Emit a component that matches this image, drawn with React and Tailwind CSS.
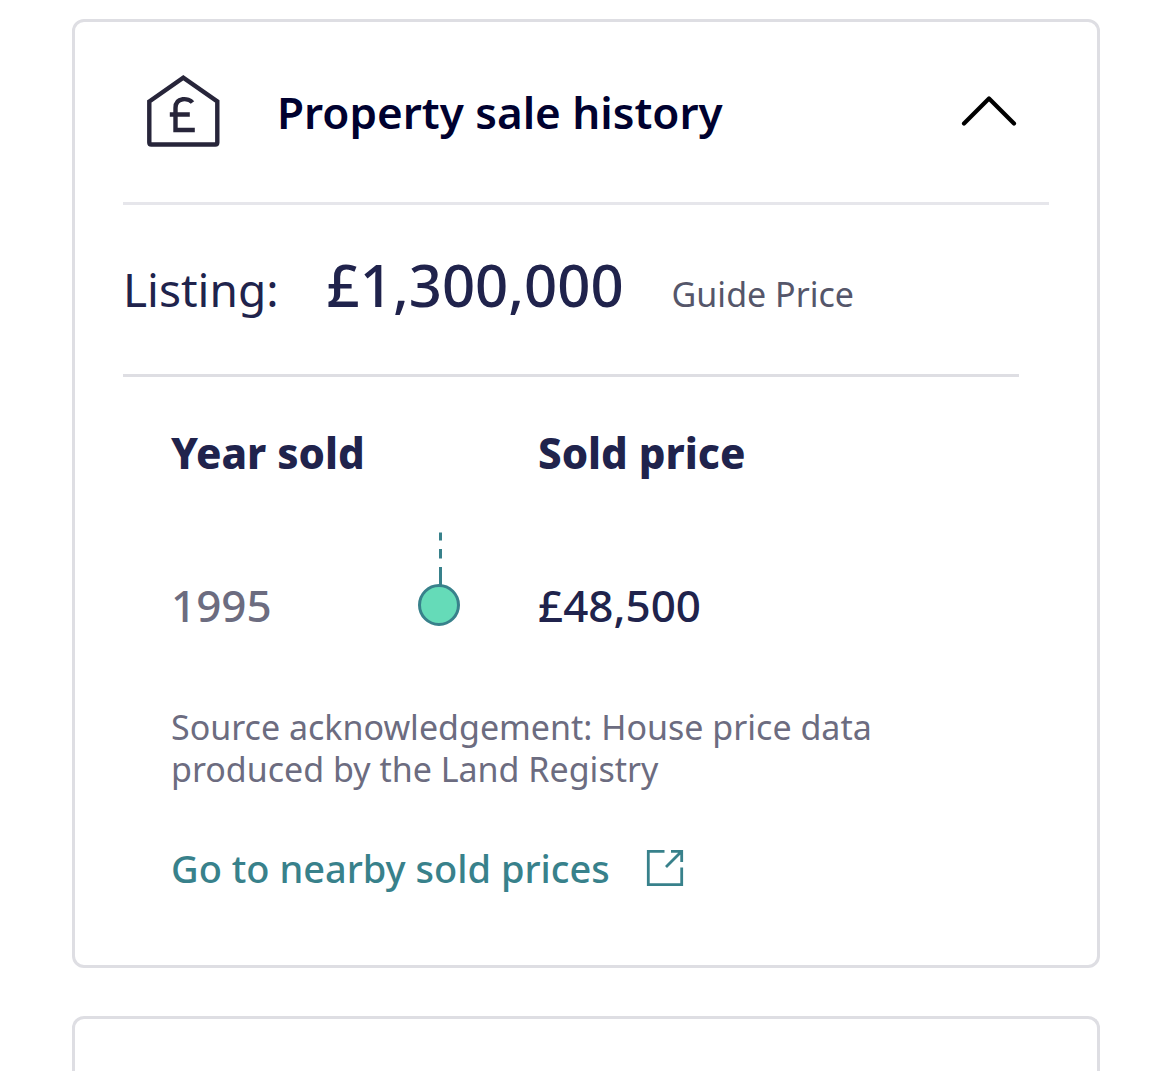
import React, { useState } from 'react';

const sales = [
    { year: '1995', price: '£48,500' },
];

const HouseIcon = () => (
    <svg width="74" height="74" viewBox="0 0 74 74" fill="none" stroke="#27253a" strokeWidth="4.4" className="shrink-0" aria-hidden="true">
        <path d="M2.300 26.500 L36.300 2.700 L70.300 26.500 V67.500 Q70.300 69.500 68.300 69.500 H4.300 Q2.300 69.500 2.300 67.500 Z" strokeLinejoin="miter" />
        <path d="M45.500 27.500 C42 23 28.500 21.500 28.500 33 V55 M22.800 39.500 H42.800 M26.300 55 H47.800" />
    </svg>
);

const Chevron = ({ open }) => (
    <svg width="56" height="32" viewBox="0 0 56 32" fill="none" stroke="#000" strokeWidth="4.2" strokeLinecap="round" strokeLinejoin="round" className={open ? 'shrink-0' : 'shrink-0 rotate-180'} aria-hidden="true">
        <path d="M3 27.500 L28 2.500 L53 27.500" />
    </svg>
);

const ExternalIcon = () => (
    <svg width="38" height="38" viewBox="0 0 38 38" fill="none" stroke="#38818b" strokeWidth="2.8" className="shrink-0" aria-hidden="true">
        <path d="M18.500 2.300 H2.300 V35.700 H35.700 V18.500" />
        <path d="M25 2.300 H35.700 V13 M35.700 2.300 L20 18" />
    </svg>
);

const TimelineDot = () => (
    <svg width="42" height="146" viewBox="0 0 42 146" fill="none" stroke="#38818b" strokeWidth="3" className="block" aria-hidden="true">
        <path d="M22.500 0.500 V8.500 M22.500 17 V26.500 M22.500 35 V53" />
        <circle cx="21" cy="73" r="19.500" fill="#65dbb8" />
    </svg>
);

const App = () => {
    const [open, setOpen] = useState(true);

    return (
        <main className="flex min-h-screen flex-col gap-12 bg-white pl-18 pr-[70px] pt-[19px] font-['Noto_Sans',sans-serif] text-[#20234c]">
            <section className="rounded-xl border-3 border-[#dedee3] px-12">
                <h2>
                    <button
                        type="button"
                        aria-expanded={open}
                        onClick={() => setOpen(!open)}
                        className="flex w-full items-center border-b-3 border-[#e6e6eb] py-[53px] pl-6 pr-8"
                    >
                        <HouseIcon />
                        <span className="ml-14 flex-1 text-left text-[44px] leading-[60px] font-semibold text-[#00012f]">Property sale history</span>
                        <Chevron open={open} />
                    </button>
                </h2>
                {open && (
                    <>
                        <div className="mr-[30px] flex items-baseline gap-12 border-b-3 border-[#dedee3] py-11">
                            <span className="text-[46px] leading-[72px]">Listing:</span>
                            <span className="text-[58px] leading-[72px] font-medium">£1,300,000</span>
                            <span className="text-[34px] leading-[72px] text-[#55566a]">Guide Price</span>
                        </div>
                        <div className="px-12 pt-12 pb-[69px]">
                            <table className="w-full text-left">
                                <thead>
                                    <tr className="text-[42px] leading-[56px]">
                                        <th className="w-[247px] p-0 font-extrabold">Year sold</th>
                                        <td className="w-[120px] p-0"></td>
                                        <th className="p-0 font-extrabold">Sold price</th>
                                    </tr>
                                </thead>
                                <tbody>
                                    {sales.map(sale => (
                                        <tr key={sale.year} className="text-[44px] leading-[56px] font-medium">
                                            <td className="p-0 pt-[51px] text-[#6c6c80]">{sale.year}</td>
                                            <td className="p-0 pt-[51px]"><TimelineDot /></td>
                                            <td className="p-0 pt-[51px]">{sale.price}</td>
                                        </tr>
                                    ))}
                                </tbody>
                            </table>
                            <p className="mt-7 max-w-[740px] text-[34px] leading-[42px] text-[#6c6c80]">
                                Source acknowledgement: House price data produced by the Land Registry
                            </p>
                            <a href="#sold-prices" className="mt-[50px] inline-flex items-center gap-9 text-[38px] leading-[56px] font-medium text-[#38818b]">
                                Go to nearby sold prices
                                <ExternalIcon />
                            </a>
                        </div>
                    </>
                )}
            </section>
            <section className="flex-1 rounded-t-xl border-3 border-b-0 border-[#dedee3]"></section>
        </main>
    );
};
export default App;
